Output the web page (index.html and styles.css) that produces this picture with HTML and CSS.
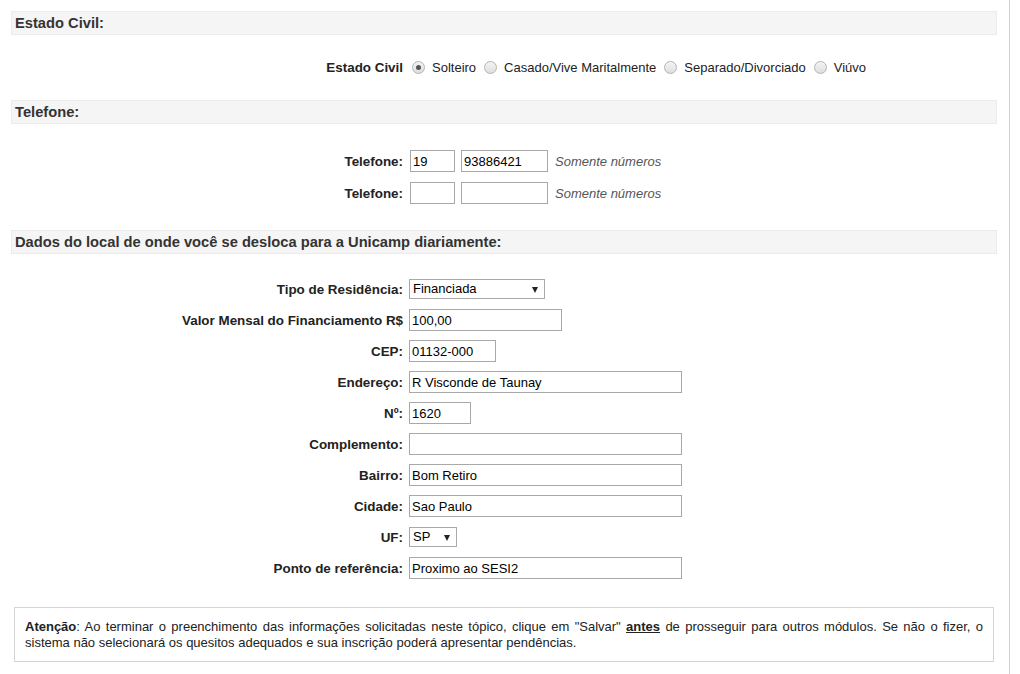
FILE: index.html
```html
<!DOCTYPE html>
<html lang="pt-BR">
<head>
<meta charset="utf-8">
<title>Dados</title>
<link rel="stylesheet" href="styles.css">
</head>
<body>
<div class="page">
  <section class="sec">
    <h2 class="sec-title">Estado Civil:</h2>
    <div class="sec-body sec-civil">
      <div class="row">
        <span class="lbl">Estado Civil</span>
        <div class="radios">
          <label class="opt"><span class="radio checked"></span>Solteiro</label>
          <label class="opt"><span class="radio"></span>Casado/Vive Maritalmente</label>
          <label class="opt"><span class="radio"></span>Separado/Divorciado</label>
          <label class="opt"><span class="radio"></span>Viúvo</label>
        </div>
      </div>
    </div>
  </section>

  <section class="sec">
    <h2 class="sec-title">Telefone:</h2>
    <div class="sec-body sec-tel">
      <div class="row">
        <span class="lbl">Telefone:</span>
        <div class="ctrls tel">
          <input class="inp w-ddd" value="19">
          <input class="inp w-num" value="93886421">
          <span class="hint">Somente números</span>
        </div>
      </div>
      <div class="row">
        <span class="lbl">Telefone:</span>
        <div class="ctrls tel">
          <input class="inp w-ddd" value="">
          <input class="inp w-num" value="">
          <span class="hint">Somente números</span>
        </div>
      </div>
    </div>
  </section>

  <section class="sec">
    <h2 class="sec-title">Dados do local de onde você se desloca para a Unicamp diariamente:</h2>
    <div class="sec-body sec-addr">
      <div class="row">
        <span class="lbl">Tipo de Residência:</span>
        <div class="ctrls"><span class="sel w-tipo">Financiada</span></div>
      </div>
      <div class="row">
        <span class="lbl">Valor Mensal do Financiamento R$</span>
        <div class="ctrls"><input class="inp w-valor" value="100,00"></div>
      </div>
      <div class="row">
        <span class="lbl">CEP:</span>
        <div class="ctrls"><input class="inp w-cep" value="01132-000"></div>
      </div>
      <div class="row">
        <span class="lbl">Endereço:</span>
        <div class="ctrls"><input class="inp w-long" value="R Visconde de Taunay"></div>
      </div>
      <div class="row">
        <span class="lbl">Nº:</span>
        <div class="ctrls"><input class="inp w-nro" value="1620"></div>
      </div>
      <div class="row">
        <span class="lbl">Complemento:</span>
        <div class="ctrls"><input class="inp w-long" value=""></div>
      </div>
      <div class="row">
        <span class="lbl">Bairro:</span>
        <div class="ctrls"><input class="inp w-long" value="Bom Retiro"></div>
      </div>
      <div class="row">
        <span class="lbl">Cidade:</span>
        <div class="ctrls"><input class="inp w-long" value="Sao Paulo"></div>
      </div>
      <div class="row">
        <span class="lbl">UF:</span>
        <div class="ctrls"><span class="sel w-uf">SP</span></div>
      </div>
      <div class="row">
        <span class="lbl">Ponto de referência:</span>
        <div class="ctrls"><input class="inp w-long" value="Proximo ao SESI2"></div>
      </div>
    </div>
  </section>

  <div class="note">
    <p class="note-text"><b>Atenção</b>: Ao terminar o preenchimento das informações solicitadas neste tópico, clique em "Salvar" <b class="u">antes</b> de prosseguir para outros módulos. Se não o fizer, o sistema não selecionará os quesitos adequados e sua inscrição poderá apresentar pendências.</p>
  </div>
</div>
</body>
</html>
```

FILE: styles.css
```css
html, body {
  margin: 0;
  padding: 0;
  background: #fff;
}

body {
  font-family: "Liberation Sans", Arial, sans-serif;
  font-size: 13px;
  color: #222;
}

.page {
  width: 998px;
  min-height: 674px;
  padding: 11px 0 0 11px;
  border-right: 1px solid #cfcfcf;
  box-sizing: content-box;
}

.sec-title {
  margin: 0;
  width: 986px;
  height: 24px;
  box-sizing: border-box;
  background: #f5f5f5;
  border: 1px solid #ececec;
  font-size: 14.7px;
  font-weight: bold;
  color: #333;
  line-height: 22px;
  padding-left: 3px;
}

.sec-body {
  display: flex;
  flex-direction: column;
}

.sec-civil {
  padding: 21px 0 22px;
}

.sec-tel {
  padding: 26px 0 26px;
  gap: 10px;
}

.sec-addr {
  padding: 24px 0 28px;
  gap: 9px;
}

.row {
  display: grid;
  grid-template-columns: 392px 1fr;
  column-gap: 6px;
  align-items: center;
  height: 22px;
}

.lbl {
  text-align: right;
  font-weight: bold;
  font-size: 13.4px;
  color: #222;
  white-space: nowrap;
}

.ctrls {
  display: flex;
  align-items: center;
}

.tel {
  padding-left: 1px;
  gap: 6px;
}

.radios {
  display: flex;
  align-items: center;
  padding-left: 3px;
}

.opt {
  display: inline-flex;
  align-items: center;
  margin-right: 8px;
  color: #222;
}

.radio {
  width: 11px;
  height: 11px;
  border: 1px solid #b4b4b4;
  border-radius: 50%;
  background: linear-gradient(#f4f4f4, #dedede);
  margin-right: 7px;
  position: relative;
  flex: none;
}

.radio.checked::after {
  content: "";
  position: absolute;
  left: 3px;
  top: 3px;
  width: 5px;
  height: 5px;
  border-radius: 50%;
  background: #555;
}

.inp {
  box-sizing: border-box;
  height: 22px;
  border: 1px solid #a9a9a9;
  padding: 1px 2px;
  font-family: "Liberation Sans", Arial, sans-serif;
  font-size: 13px;
  color: #000;
  margin: 0;
  outline: none;
  background: #fff;
}

.w-ddd { width: 45px; }
.w-num { width: 87px; }
.w-valor { width: 153px; }
.w-cep { width: 87px; }
.w-long { width: 273px; }
.w-nro { width: 62px; }

.hint {
  margin-left: 1px;
  font-style: italic;
  color: #555;
}

.sel {
  box-sizing: border-box;
  height: 20px;
  border: 1px solid #a9a9a9;
  padding: 0 3px;
  line-height: 18px;
  color: #000;
  position: relative;
  background: #fff;
}

.sel::after {
  content: "";
  position: absolute;
  right: 6px;
  top: 7px;
  border-left: 3.5px solid transparent;
  border-right: 3.5px solid transparent;
  border-top: 6px solid #222;
}

.w-tipo { width: 136px; }
.w-uf { width: 48px; }

.note {
  margin-left: 3px;
  width: 980px;
  box-sizing: border-box;
  border: 1px solid #d4d4d4;
  padding: 11px 10px 10px;
}

.note-text {
  margin: 0;
  font-size: 13px;
  line-height: 16px;
  color: #222;
  text-align: justify;
}

.note .u {
  text-decoration: underline;
}
```
